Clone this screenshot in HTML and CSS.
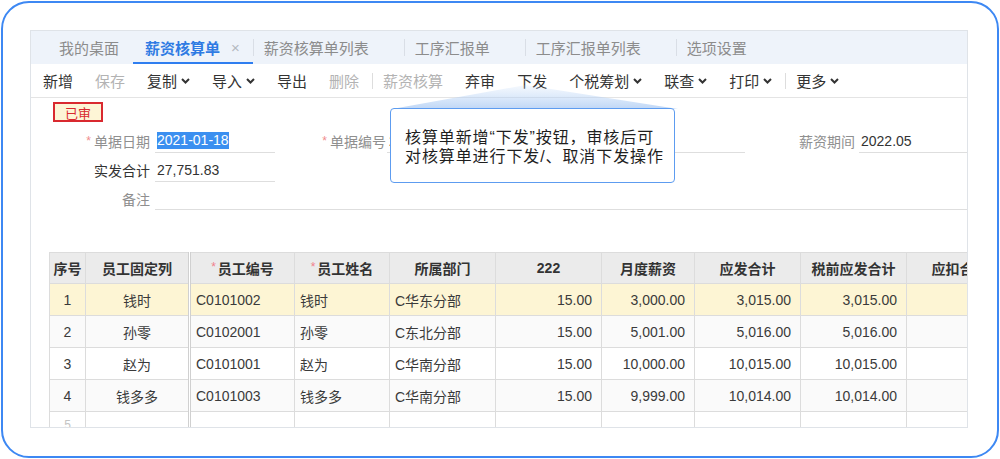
FILE: index.html
```html
<!DOCTYPE html>
<html lang="zh-CN">
<head>
<meta charset="utf-8">
<title>薪资核算单</title>
<link rel="stylesheet" href="styles.css">
</head>
<body>
<div class="frame">
  <div class="app">
    <div class="tabs">
      <div class="tab first">我的桌面</div>
      <div class="tab active">薪资核算单<span class="close">×</span></div>
      <span class="tsep"></span>
      <div class="tab">薪资核算单列表</div>
      <span class="tsep"></span>
      <div class="tab">工序汇报单</div>
      <span class="tsep"></span>
      <div class="tab">工序汇报单列表</div>
      <span class="tsep"></span>
      <div class="tab">选项设置</div>
    </div>
    <div class="toolbar">
      <span class="btn">新增</span>
      <span class="btn dis">保存</span>
      <span class="btn">复制<svg class="chev" viewBox="0 0 9 6"><polyline points="1,1 4.5,4.5 8,1"/></svg></span>
      <span class="btn">导入<svg class="chev" viewBox="0 0 9 6"><polyline points="1,1 4.5,4.5 8,1"/></svg></span>
      <span class="btn">导出</span>
      <span class="btn dis">删除</span>
      <span class="bsep"></span>
      <span class="btn dis">薪资核算</span>
      <span class="btn">弃审</span>
      <span class="btn">下发</span>
      <span class="btn">个税筹划<svg class="chev" viewBox="0 0 9 6"><polyline points="1,1 4.5,4.5 8,1"/></svg></span>
      <span class="btn">联查<svg class="chev" viewBox="0 0 9 6"><polyline points="1,1 4.5,4.5 8,1"/></svg></span>
      <span class="btn">打印<svg class="chev" viewBox="0 0 9 6"><polyline points="1,1 4.5,4.5 8,1"/></svg></span>
      <span class="bsep"></span>
      <span class="btn">更多<svg class="chev" viewBox="0 0 9 6"><polyline points="1,1 4.5,4.5 8,1"/></svg></span>
    </div>
    <div class="form">
      <div class="badge">已审</div>
      <div class="frow r1">
        <label class="lbl l1 req">单据日期</label>
        <div class="fld f1"><span class="sel">2021-01-18</span></div>
        <label class="lbl l2 req">单据编号</label>
        <div class="fld f2">2021011800001</div>
        <label class="lbl l3">薪资期间</label>
        <div class="fld f3">2022.05</div>
      </div>
      <div class="frow r2">
        <label class="lbl l1 dark">实发合计</label>
        <div class="fld f1">27,751.83</div>
      </div>
      <div class="frow r3">
        <label class="lbl l1">备注</label>
        <div class="fld f3"></div>
      </div>
    </div>
    <div class="grid">
      <table>
        <colgroup>
          <col class="c1"><col class="c2"><col class="c3"><col class="c4"><col class="c5">
          <col class="c6"><col class="c7"><col class="c8"><col class="c9"><col class="c10">
        </colgroup>
        <thead>
          <tr>
            <th>序号</th><th class="frz">员工固定列</th><th><i class="ast">*</i>员工编号</th><th><i class="ast">*</i>员工姓名</th><th>所属部门</th>
            <th>222</th><th>月度薪资</th><th>应发合计</th><th>税前应发合计</th><th>应扣合计</th>
          </tr>
        </thead>
        <tbody>
          <tr class="cur">
            <td class="ctr">1</td><td class="ctr frz">钱时</td><td>C0101002</td><td>钱时</td><td>C华东分部</td>
            <td class="num">15.00</td><td class="num">3,000.00</td><td class="num">3,015.00</td><td class="num">3,015.00</td><td></td>
          </tr>
          <tr class="alt">
            <td class="ctr">2</td><td class="ctr frz">孙零</td><td>C0102001</td><td>孙零</td><td>C东北分部</td>
            <td class="num">15.00</td><td class="num">5,001.00</td><td class="num">5,016.00</td><td class="num">5,016.00</td><td></td>
          </tr>
          <tr>
            <td class="ctr">3</td><td class="ctr frz">赵为</td><td>C0101001</td><td>赵为</td><td>C华南分部</td>
            <td class="num">15.00</td><td class="num">10,000.00</td><td class="num">10,015.00</td><td class="num">10,015.00</td><td></td>
          </tr>
          <tr class="alt">
            <td class="ctr">4</td><td class="ctr frz">钱多多</td><td>C0101003</td><td>钱多多</td><td>C华南分部</td>
            <td class="num">15.00</td><td class="num">9,999.00</td><td class="num">10,014.00</td><td class="num">10,014.00</td><td></td>
          </tr>
          <tr class="empty">
            <td class="ctr faint">5</td><td class="frz"></td><td></td><td></td><td></td>
            <td></td><td></td><td></td><td></td><td></td>
          </tr>
        </tbody>
      </table>
    </div>
  </div>
  <svg class="pointer" viewBox="0 0 300 24" preserveAspectRatio="none">
    <defs>
      <linearGradient id="pg" x1="0" y1="0" x2="0" y2="1">
        <stop offset="0" stop-color="#bcd6f7" stop-opacity="0.15"/>
        <stop offset="1" stop-color="#a9c9f3" stop-opacity="0.75"/>
      </linearGradient>
    </defs>
    <polygon points="0,24 140,0 300,24" fill="url(#pg)"/>
  </svg>
  <div class="tip">核算单新增“下发”按钮，审核后可<br>对核算单进行下发/、取消下发操作</div>
</div>
</body>
</html>
```

FILE: styles.css
```css
html, body {
  margin: 0;
  padding: 0;
  background: #ffffff;
}
body {
  font-family: "Liberation Sans", "Noto Sans CJK SC", sans-serif;
  color: #333333;
}
.frame {
  position: relative;
  margin: 1px;
  width: 998px;
  height: 457px;
  box-sizing: border-box;
  border: 2px solid #3d88f3;
  border-radius: 28px;
  padding: 27px 0 0 27px;
  background: #ffffff;
}
.app {
  width: 938px;
  height: 398px;
  box-sizing: border-box;
  border: 1px solid #dfe3e8;
  overflow: hidden;
  display: flex;
  flex-direction: column;
  background: #ffffff;
}

/* tabs */
.tabs {
  height: 33px;
  flex: none;
  display: flex;
  align-items: stretch;
  background: #eef3fa;
  font-size: 15px;
  color: #8c8c8c;
}
.tab {
  display: flex;
  align-items: center;
  padding: 0 35px 0 10px;
  white-space: nowrap;
}
.tab.first {
  padding: 0 14px 0 28px;
}
.tab.active {
  padding: 2px 13px 0 12px;
  color: #2f7be3;
  font-weight: bold;
  border-bottom: 2px solid #2f7ef0;
}
.close {
  margin-left: 11px;
  font-weight: normal;
  color: #b4b9c0;
  font-size: 15px;
}
.tsep {
  flex: none;
  width: 1px;
  height: 17px;
  align-self: center;
  background: #d9dee6;
}

/* toolbar */
.toolbar {
  height: 33px;
  flex: none;
  display: flex;
  align-items: center;
  gap: 22px;
  padding-left: 12px;
  border-bottom: 1px solid #e4e4e4;
  font-size: 15px;
  color: #333333;
  white-space: nowrap;
}
.btn {
  display: flex;
  align-items: center;
}
.btn.dis {
  color: #b3b3b3;
}
.chev {
  width: 9px;
  height: 6px;
  margin-left: 4px;
  fill: none;
  stroke: #333333;
  stroke-width: 2;
}
.bsep {
  width: 1px;
  height: 16px;
  background: #dddddd;
  margin: 0 -12px 0 -9px;
}

/* form */
.form {
  flex: none;
  padding: 4px 0 0 0;
  height: 150px;
  box-sizing: border-box;
}
.badge {
  margin-left: 22px;
  width: 50px;
  height: 20px;
  box-sizing: border-box;
  border: 2px solid #d9292f;
  background: #fdf5d6;
  color: #d9292f;
  font-size: 13px;
  display: flex;
  align-items: center;
  justify-content: center;
}
.frow {
  display: flex;
  align-items: center;
  font-size: 14px;
}
.r1 { margin-top: 7px; }
.r2 { margin-top: 5px; }
.r3 { margin-top: 5px; }
.lbl {
  text-align: right;
  color: #8f8f8f;
  white-space: nowrap;
  flex: none;
}
.lbl.dark { color: #333333; }
.lbl.req::before {
  content: "*";
  color: #f08c8c;
  font-size: 12px;
  margin-right: 3px;
  vertical-align: 2px;
}
.l1 { width: 119px; margin-right: 5px; }
.l2 { width: 111px; margin-right: 1px; }
.l3 { width: 110px; margin-right: 4px; }
.fld {
  height: 24px;
  box-sizing: border-box;
  border-bottom: 1px solid #dedede;
  display: flex;
  align-items: center;
  padding-left: 2px;
  color: #333333;
  white-space: nowrap;
  overflow: hidden;
}
.f1 { width: 120px; flex: none; }
.f2 { width: 358px; flex: none; }
.f3 { flex: 1; }
.r3 .fld { height: 23px; }
.sel {
  background: #3b8ff0;
  color: #ffffff;
  line-height: 17px;
}

/* grid */
.grid {
  flex: 1;
  padding-left: 18px;
  margin-top: 4px;
  overflow: hidden;
}
table {
  border-collapse: collapse;
  table-layout: fixed;
  width: 963px;
  font-size: 14px;
  color: #3a3a3a;
}
.c1 { width: 36px; }
.c2 { width: 104px; }
.c3 { width: 105px; }
.c4 { width: 95px; }
.c5 { width: 106px; }
.c6 { width: 106px; }
.c7 { width: 93px; }
.c8 { width: 106px; }
.c9 { width: 106px; }
.c10 { width: 106px; }
th, td {
  border: 1px solid #dcdcdc;
  white-space: nowrap;
  overflow: hidden;
}
th {
  height: 30px;
  background: #ebebeb;
  font-weight: bold;
  color: #333333;
  text-align: center;
  padding: 0;
}
td {
  height: 31px;
  padding: 0 5px;
  text-align: left;
}
.frz {
  border-right: 3px double #d0d0d0;
}
.ast {
  font-style: normal;
  color: #f0808c;
  font-weight: normal;
  font-size: 12px;
  vertical-align: 3px;
  margin-right: 2px;
}
td.ctr { text-align: center; }
td.num { text-align: right; padding-right: 9px; }
tr.cur td { background: #fdf5d4; }
tr.alt td { background: #fafafa; }
td.faint { color: #c4c4c4; vertical-align: top; padding-top: 6px; font-size: 12px; }

/* tooltip (overlay) */
.pointer {
  position: absolute;
  left: 389px;
  top: 82px;
  width: 286px;
  height: 24px;
}
.tip {
  position: absolute;
  left: 387px;
  top: 105px;
  width: 285px;
  height: 75px;
  box-sizing: border-box;
  border: 1px solid #5d9cf0;
  border-radius: 4px;
  background: #ffffff;
  color: #1f1f1f;
  font-size: 16px;
  line-height: 19px;
  padding: 19px 0 0 14px;
  letter-spacing: 0.9px;
}
```
